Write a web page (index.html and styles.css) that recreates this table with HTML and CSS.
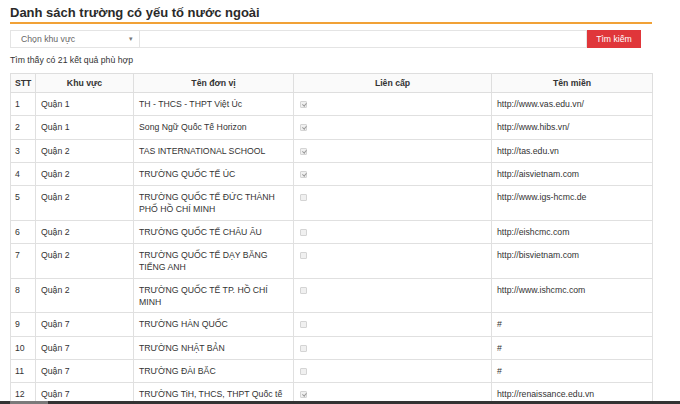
FILE: index.html
```html
<!DOCTYPE html>
<html lang="vi">
<head>
<meta charset="utf-8">
<title>Danh sách trường có yếu tố nước ngoài</title>
<link rel="stylesheet" href="styles.css">
</head>
<body>
<div class="page">
  <h1 class="title">Danh sách trường có yếu tố nước ngoài</h1>
  <div class="search">
    <div class="select"><span>Chọn khu vực</span><span class="caret">▾</span></div>
    <div class="input"></div>
    <button class="btn">Tìm kiếm</button>
  </div>
  <p class="count">Tìm thấy có 21 kết quả phù hợp</p>
  <table class="list">
    <thead>
      <tr>
        <th class="c-stt">STT</th>
        <th class="c-kv">Khu vực</th>
        <th class="c-name">Tên đơn vị</th>
        <th class="c-lc">Liên cấp</th>
        <th class="c-web">Tên miền</th>
      </tr>
    </thead>
    <tbody>
      <tr><td>1</td><td>Quận 1</td><td>TH - THCS - THPT Việt Úc</td><td><span class="chk on"></span></td><td>http://www.vas.edu.vn/</td></tr>
      <tr><td>2</td><td>Quận 1</td><td>Song Ngữ Quốc Tế Horizon</td><td><span class="chk on"></span></td><td>http://www.hibs.vn/</td></tr>
      <tr><td>3</td><td>Quận 2</td><td>TAS INTERNATIONAL SCHOOL</td><td><span class="chk on"></span></td><td>http://tas.edu.vn</td></tr>
      <tr><td>4</td><td>Quận 2</td><td>TRƯỜNG QUỐC TẾ ÚC</td><td><span class="chk on"></span></td><td>http://aisvietnam.com</td></tr>
      <tr><td>5</td><td>Quận 2</td><td>TRƯỜNG QUỐC TẾ ĐỨC THÀNH PHỐ HỒ CHÍ MINH</td><td><span class="chk"></span></td><td>http://www.igs-hcmc.de</td></tr>
      <tr><td>6</td><td>Quận 2</td><td>TRƯỜNG QUỐC TẾ CHÂU ÂU</td><td><span class="chk"></span></td><td>http://eishcmc.com</td></tr>
      <tr><td>7</td><td>Quận 2</td><td>TRƯỜNG QUỐC TẾ DẠY BẰNG TIẾNG ANH</td><td><span class="chk"></span></td><td>http://bisvietnam.com</td></tr>
      <tr><td>8</td><td>Quận 2</td><td>TRƯỜNG QUỐC TẾ TP. HỒ CHÍ MINH</td><td><span class="chk"></span></td><td>http://www.ishcmc.com</td></tr>
      <tr><td>9</td><td>Quận 7</td><td>TRƯỜNG HÀN QUỐC</td><td><span class="chk"></span></td><td>#</td></tr>
      <tr><td>10</td><td>Quận 7</td><td>TRƯỜNG NHẬT BẢN</td><td><span class="chk"></span></td><td>#</td></tr>
      <tr><td>11</td><td>Quận 7</td><td>TRƯỜNG ĐÀI BẮC</td><td><span class="chk"></span></td><td>#</td></tr>
      <tr><td>12</td><td>Quận 7</td><td>TRƯỜNG TiH, THCS, THPT Quốc tế</td><td><span class="chk on"></span></td><td>http://renaissance.edu.vn</td></tr>
    </tbody>
  </table>
</div>
<div class="scrollbar"><div class="thumb"></div></div>
</body>
</html>
```

FILE: styles.css
```css
html, body {
  margin: 0;
  padding: 0;
  background: #fff;
  overflow: hidden;
}

body {
  font-family: "Liberation Sans", Arial, sans-serif;
  color: #333;
  height: 404px;
}

.page {
  width: 642px;
  padding: 5px 0 0 10px;
}

.title {
  margin: 0;
  font-size: 13px;
  font-weight: bold;
  line-height: 16px;
  color: #2a2a2a;
  padding-bottom: 1px;
  border-bottom: 2px solid #f1a136;
}

.search {
  display: flex;
  width: 631px;
  margin-top: 6px;
  height: 18px;
}

.select {
  width: 130px;
  box-sizing: border-box;
  border: 1px solid #e4e4e4;
  display: flex;
  align-items: center;
  justify-content: space-between;
  padding: 0 6px 0 10px;
  font-size: 8.7px;
  color: #666;
}

.caret {
  font-size: 7px;
  color: #777;
}

.input {
  flex: 1;
  box-sizing: border-box;
  border: 1px solid #e4e4e4;
  border-left: none;
}

.btn {
  width: 54px;
  border: none;
  background: #e0363a;
  color: #fff;
  font-family: "Liberation Sans", Arial, sans-serif;
  font-size: 8.7px;
  padding: 0;
  height: 18px;
}

.count {
  margin: 6px 0 0;
  font-size: 8.7px;
  line-height: 12px;
  color: #333;
}

.list {
  margin-top: 7px;
  width: 642px;
  border-collapse: collapse;
  border: 1px solid #dedede;
  font-size: 8.7px;
  table-layout: fixed;
}

.list th {
  box-sizing: border-box;
  font-weight: bold;
  text-align: center;
  padding: 3px 5px 3px;
  line-height: 12px;
  background: #fafafa;
  border: 1px solid #dedede;
  color: #333;
}

.list td {
  padding: 5px 5px 4px;
  line-height: 12.3px;
  vertical-align: top;
  border: 1px solid #e0e0e0;
  color: #333;
}

.list th:first-child,
.list td:first-child {
  padding-left: 4px;
}

.c-stt { width: 25px; }
.c-kv { width: 98px; }
.c-name { width: 160px; }
.c-lc { width: 198px; }
.c-web { width: 161px; }

.chk {
  display: inline-block;
  width: 5px;
  height: 5px;
  margin: 3px 0 0 1px;
  border: 1px solid #d4d4d4;
  background: #f0f0f0;
  border-radius: 1px;
  position: relative;
}

.chk.on::after {
  content: "";
  position: absolute;
  left: 1.5px;
  top: 0;
  width: 1.5px;
  height: 3px;
  border: solid #9a9a9a;
  border-width: 0 1px 1px 0;
  transform: rotate(40deg);
}

.scrollbar {
  position: fixed;
  left: 0;
  right: 0;
  bottom: 0;
  height: 3px;
  background: #333;
}

.thumb {
  position: absolute;
  left: 10px;
  top: 0;
  width: 38px;
  height: 3px;
  background: #7a7a7a;
}
```
